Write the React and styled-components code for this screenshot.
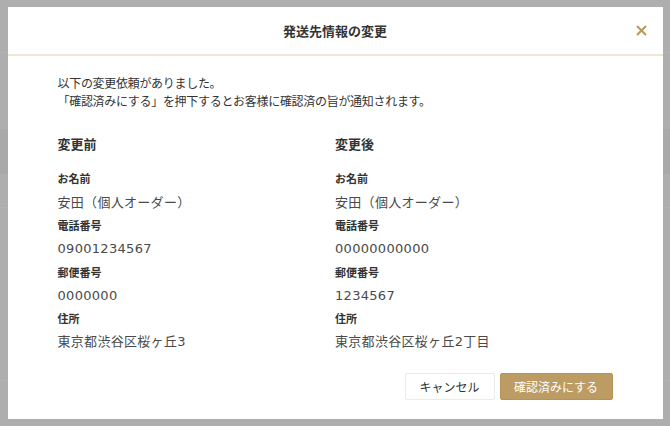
import React from 'react'
import styled, {createGlobalStyle} from 'styled-components'

const GlobalStyle = createGlobalStyle`
    html, body {
        margin: 0;
        padding: 0;
        height: 100%;
    }
    body {
        font-family: "Noto Sans CJK JP", "Noto Sans", sans-serif;
        color: #333;
        -webkit-font-smoothing: antialiased;
    }
`

const before = [
    {label: 'お名前', value: '安田（個人オーダー）'},
    {label: '電話番号', value: '09001234567'},
    {label: '郵便番号', value: '0000000'},
    {label: '住所', value: '東京都渋谷区桜ヶ丘3'},
]

const after = [
    {label: 'お名前', value: '安田（個人オーダー）'},
    {label: '電話番号', value: '00000000000'},
    {label: '郵便番号', value: '1234567'},
    {label: '住所', value: '東京都渋谷区桜ヶ丘2丁目'},
]

// page behind the overlay
const Page = styled.div`
    height: 426px;
    background: #f9f9f9;
    display: flex;
    flex-direction: column;
`
const PageBar = styled.div`
    height: ${p => p.$height}px;
    flex: none;
    background: ${p => p.$shade ? '#f2f2f2' : 'transparent'};
    border-bottom: 1px solid ${p => p.$line ? '#fff' : 'transparent'};
`

const Overlay = styled.div`
    position: fixed;
    inset: 0;
    background: rgba(0, 0, 0, 0.3);
    display: flex;
    align-items: center;
    justify-content: center;
`

const Modal = styled.div`
    width: 655px;
    background: #fff;
    display: flex;
    flex-direction: column;
`

const Header = styled.div`
    height: 49px;
    box-sizing: border-box;
    border-bottom: 2px solid #efe6d5;
    display: flex;
    align-items: center;
    justify-content: center;
    position: relative;
`
const Title = styled.h2`
    margin: 0;
    font-size: 13px;
    font-weight: 700;
    color: #333;
    line-height: 20px;
    padding-top: 1px;
`
const CloseButton = styled.button`
    position: absolute;
    right: 16px;
    top: 18px;
    width: 11px;
    height: 11px;
    padding: 0;
    border: none;
    background: none;
    cursor: pointer;
    display: flex;
    & svg {
        display: block;
    }
`

const Body = styled.div`
    padding: 18px 50px 19px;
    display: flex;
    flex-direction: column;
`
const Intro = styled.p`
    margin: 0;
    font-size: 12px;
    letter-spacing: -0.3px;
    line-height: 18px;
    color: #333;
`

const Columns = styled.div`
    margin-top: 24px;
    display: grid;
    grid-template-columns: 1fr 1fr;
`
const Column = styled.div`
    display: flex;
    flex-direction: column;
`
const ColumnTitle = styled.h3`
    margin: 0 0 13px;
    font-size: 13px;
    font-weight: 700;
    line-height: 20px;
    color: #333;
`
const Label = styled.div`
    font-size: 11px;
    font-weight: 700;
    line-height: 23.3px;
    color: #333;
`
const Value = styled.div`
    font-family: "DejaVu Sans", "Noto Sans CJK JP", sans-serif;
    font-size: 13px;
    line-height: 23.3px;
    color: #4a4a4a;
    letter-spacing: 0.3px;
`

const Actions = styled.div`
    margin-top: 19px;
    display: flex;
    justify-content: flex-end;
    gap: 5px;
`
const Button = styled.button`
    height: 27px;
    box-sizing: border-box;
    padding: 0;
    width: ${p => p.$primary ? '113px' : '90px'};
    font-family: inherit;
    font-size: 12px;
    border-radius: 2px;
    border: 1px solid ${p => p.$primary ? '#b39356' : '#ebebeb'};
    background: ${p => p.$primary ? '#bc9c62' : '#fff'};
    color: ${p => p.$primary ? '#fff' : '#333'};
    cursor: pointer;
`

const CloseIcon = () => (
    <svg width="11" height="11" viewBox="0 0 11 11">
        <path d="M1 1 L10 10 M10 1 L1 10" stroke="#b8995c" strokeWidth="2" fill="none" />
    </svg>
)

const Detail = ({title, rows}) => (
    <Column>
        <ColumnTitle>{title}</ColumnTitle>
        {rows.map(r => (
            <React.Fragment key={r.label}>
                <Label>{r.label}</Label>
                <Value>{r.value}</Value>
            </React.Fragment>
        ))}
    </Column>
)

const App = () => (
    <>
        <GlobalStyle />
        <Page>
            <PageBar $height={52} $line />
            <PageBar $height={75} />
            <PageBar $height={44} $shade />
            <PageBar $height={33} $line />
            <PageBar $height={172} $line />
        </Page>
        <Overlay>
            <Modal>
                <Header>
                    <Title>発送先情報の変更</Title>
                    <CloseButton aria-label="閉じる"><CloseIcon /></CloseButton>
                </Header>
                <Body>
                    <Intro>
                        以下の変更依頼がありました。<br />
                        「確認済みにする」を押下するとお客様に確認済の旨が通知されます。
                    </Intro>
                    <Columns>
                        <Detail title="変更前" rows={before} />
                        <Detail title="変更後" rows={after} />
                    </Columns>
                    <Actions>
                        <Button>キャンセル</Button>
                        <Button $primary>確認済みにする</Button>
                    </Actions>
                </Body>
            </Modal>
        </Overlay>
    </>
)

export default App
